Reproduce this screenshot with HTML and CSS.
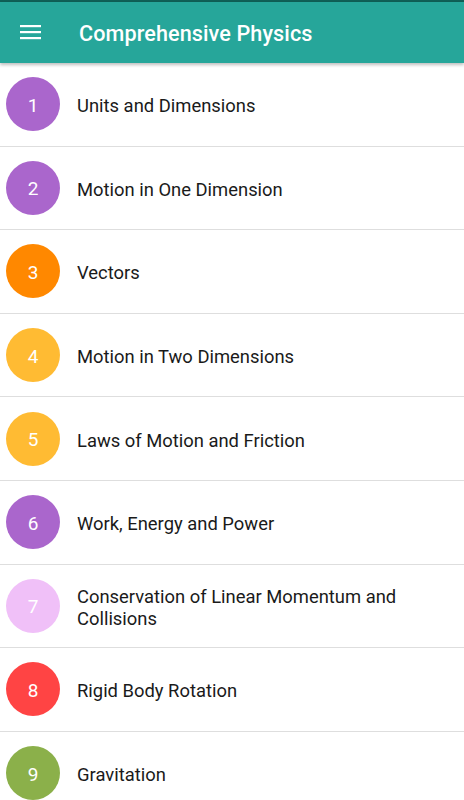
FILE: index.html
```html
<!DOCTYPE html>
<html>
<head>
<meta charset="utf-8">
<link rel="stylesheet" href="styles.css">
</head>
<body>
<div class="statusbar"></div>
<header class="appbar">
  <svg class="menu" width="22" height="16" viewBox="0 0 22 16"><rect x="0" y="1" width="21" height="2.2" fill="#fff"/><rect x="0" y="7" width="21" height="2.2" fill="#fff"/><rect x="0" y="13" width="21" height="2.2" fill="#fff"/></svg>
  <h1 class="title">Comprehensive Physics</h1>
</header>
<ul class="list">
  <li class="row"><span class="badge purple">1</span><span class="label">Units and Dimensions</span></li>
  <li class="row"><span class="badge purple">2</span><span class="label">Motion in One Dimension</span></li>
  <li class="row"><span class="badge orange">3</span><span class="label">Vectors</span></li>
  <li class="row"><span class="badge amber">4</span><span class="label">Motion in Two Dimensions</span></li>
  <li class="row"><span class="badge amber">5</span><span class="label">Laws of Motion and Friction</span></li>
  <li class="row"><span class="badge purple">6</span><span class="label">Work, Energy and Power</span></li>
  <li class="row"><span class="badge pink">7</span><span class="label">Conservation of Linear Momentum and Collisions</span></li>
  <li class="row"><span class="badge red">8</span><span class="label">Rigid Body Rotation</span></li>
  <li class="row"><span class="badge green">9</span><span class="label">Gravitation</span></li>
</ul>
</body>
</html>
```
FILE: styles.css
```css
html, body {
  margin: 0;
  padding: 0;
  background: #fff;
  font-family: Roboto, "Liberation Sans", sans-serif;
  width: 464px;
  height: 800px;
  overflow: hidden;
}
.statusbar {
  height: 2px;
  background: #0f5f56;
}
.appbar {
  position: relative;
  z-index: 2;
  height: 61px;
  background: #26a69a;
  display: flex;
  align-items: center;
  box-shadow: 0 2px 3px rgba(0,0,0,0.25);
}
.menu {
  margin-left: 20px;
  margin-top: -1px;
  display: block;
}
.title {
  margin: 1px 0 0 37px;
  color: #fff;
  font-size: 21.6px;
  font-weight: 500;
  letter-spacing: 0.1px;
}
.list {
  list-style: none;
  margin: 0;
  padding: 0;
}
.row {
  height: 82.6px;
  border-bottom: 1px solid #dedede;
  display: flex;
  align-items: center;
}
.badge {
  flex: 0 0 54px;
  width: 54px;
  height: 54px;
  border-radius: 50%;
  margin-left: 6px;
  padding-top: 2px;
  box-sizing: border-box;
  display: flex;
  align-items: center;
  justify-content: center;
  color: #fff;
  font-size: 19px;
}
.label {
  margin-left: 17px;
  margin-right: 40px;
  padding-top: 4px;
  font-size: 18.4px;
  line-height: 22px;
  color: #1a1a1a;
}
.purple { background: #aa66cc; }
.orange { background: #ff8800; }
.amber { background: #ffbb33; }
.pink { background: #f0c0f8; }
.red { background: #ff4444; }
.green { background: #8bb04a; }
```
